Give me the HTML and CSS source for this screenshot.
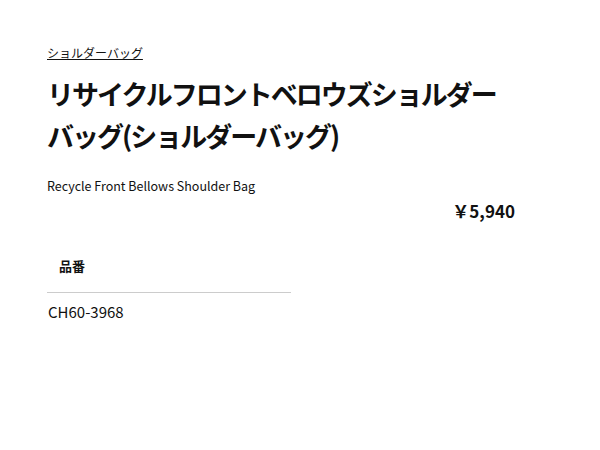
FILE: index.html
```html
<!DOCTYPE html>
<html lang="ja">
<head>
<meta charset="utf-8">
<link rel="stylesheet" href="styles.css">
</head>
<body>
<div class="page">
  <a class="crumb" href="#">ショルダーバッグ</a>
  <h1 class="title">リサイクルフロントベロウズショルダーバッグ(ショルダーバッグ)</h1>
  <p class="en">Recycle Front Bellows Shoulder Bag</p>
  <div class="price">￥5,940</div>
  <div class="spec">
    <div class="spec-head">品番</div>
    <div class="spec-val">CH60-3968</div>
  </div>
</div>
</body>
</html>
```
FILE: styles.css
```css
html, body { margin: 0; padding: 0; background: #fff; }
body { font-family: "Noto Sans CJK JP", "Open Sans", sans-serif; color: #111; }
.page { width: 470px; padding: 43px 0 0 47px; }
.crumb { display: block; font-size: 12px; color: #111; text-decoration: underline; line-height: 20px; }
.title { margin: 10px 0 0; font-size: 27px; font-weight: 700; line-height: 42px; width: 470px; letter-spacing: -2px; }
.en { margin: 19px 0 0; font-size: 12.5px; line-height: 20px; }
.price { text-align: right; font-size: 17px; font-weight: 700; line-height: 24px; margin-top: 3px; padding-right: 2px; }
.spec { width: 244px; margin-top: 33px; }
.spec-head { font-size: 13px; font-weight: 700; padding: 0 12px; line-height: 20px; padding-bottom: 16px; border-bottom: 1px solid #ccc; }
.spec-val { font-size: 15px; line-height: 22px; padding-top: 8px; padding-left: 1px; }
```
